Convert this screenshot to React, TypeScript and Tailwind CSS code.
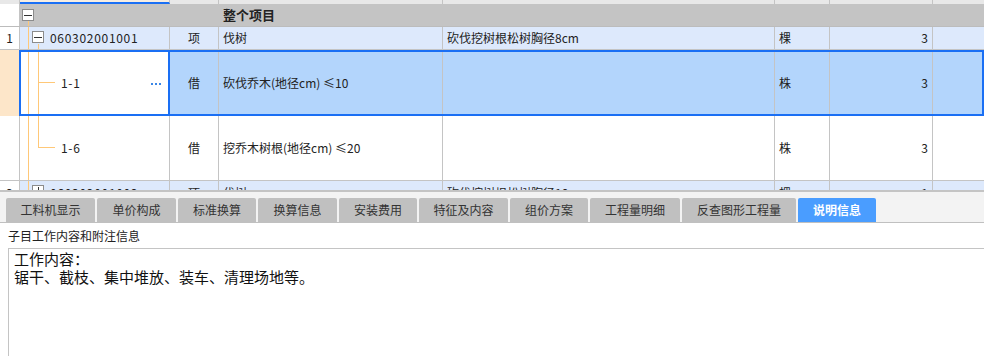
const cjk = { fontFamily: '"Noto Sans CJK SC", "Liberation Sans", sans-serif' };

const tabs = [
  { label: "工料机显示", w: "w-[89px]" },
  { label: "单价构成", w: "w-[79px]" },
  { label: "标准换算", w: "w-[78px]" },
  { label: "换算信息", w: "w-[79px]" },
  { label: "安装费用", w: "w-[78px]" },
  { label: "特征及内容", w: "w-[89px]" },
  { label: "组价方案", w: "w-[78px]" },
  { label: "工程量明细", w: "w-[90px]" },
  { label: "反查图形工程量", w: "w-[114px]" },
  { label: "说明信息", w: "w-[78px]", active: true },
];

function Box({ sign }: { sign: "-" | "+" }) {
  return (
    <span className="absolute w-[12px] h-[12px] border border-[#8c8c8c] bg-white flex items-center justify-center">
      <span className="block w-[8px] h-[1px] bg-[#333]" />
      {sign === "+" && <span className="absolute block w-[1px] h-[8px] bg-[#333]" />}
    </span>
  );
}

const line = "absolute bg-[#ffc878]";
const cell = "h-full border-r border-[#c4c4c4] flex items-center shrink-0";

export default function App() {
  return (
    <div className="w-[984px] h-[356px] overflow-hidden bg-white text-[12px] text-[#222]" style={cjk}>
      {/* grid */}
      <div className="h-[190px] overflow-hidden flex flex-col">
        {/* header strip */}
        <div className="h-[4px] flex shrink-0 bg-[#e8e8e8]">
          <div className="w-[20px] border-r border-[#c4c4c4]" />
          <div className="w-[150px] border-r border-[#c4c4c4] bg-[#f6ede2] border-b-2 border-b-[#1a6ff4]" />
          <div className="w-[49px] border-r border-[#c4c4c4]" />
          <div className="w-[224px] border-r border-[#c4c4c4]" />
          <div className="w-[332px] border-r border-[#c4c4c4]" />
          <div className="w-[55px] border-r border-[#c4c4c4]" />
          <div className="w-[103px] border-r border-[#c4c4c4]" />
          <div className="flex-1" />
        </div>

        {/* 整个项目 */}
        <div className="h-[23px] flex shrink-0 border-b border-[#bcbcbc]">
          <div className={`${cell} w-[20px] bg-white`} />
          <div className={`${cell} w-[150px] bg-[#c4c4c4] relative`}>
            <span className="absolute left-[2px] top-[5px]"><Box sign="-" /></span>
            <span className={`${line} left-[8px] top-[17px] bottom-0 w-[1px]`} />
          </div>
          <div className={`${cell} w-[49px] bg-[#c4c4c4]`} />
          <div className={`${cell} w-[224px] bg-[#c4c4c4] pl-[4px] font-bold text-[13px]`}>整个项目</div>
          <div className={`${cell} w-[332px] bg-[#c4c4c4]`} />
          <div className={`${cell} w-[55px] bg-[#c4c4c4]`} />
          <div className={`${cell} w-[103px] bg-[#c4c4c4]`} />
          <div className="flex-1 bg-[#c4c4c4]" />
        </div>

        {/* row 1 */}
        <div className="h-[23px] flex shrink-0 bg-[#dde9fc] border-b border-[#c4c4c4]">
          <div className={`${cell} w-[20px] bg-white justify-center`}>1</div>
          <div className={`${cell} w-[150px] relative pl-[30px] tracking-[0.7px]`}>
            <span className={`${line} left-[8px] top-0 bottom-0 w-[1px]`} />
            <span className="absolute left-[12px] top-[4px]"><Box sign="-" /></span>
            <span className={`${line} left-[18px] top-[17px] bottom-0 w-[1px]`} />
            060302001001
          </div>
          <div className={`${cell} w-[49px] justify-center`}>项</div>
          <div className={`${cell} w-[224px] pl-[4px]`}>伐树</div>
          <div className={`${cell} w-[332px] pl-[4px]`}>砍伐挖树根松树胸径8cm</div>
          <div className={`${cell} w-[55px] pl-[4px]`}>棵</div>
          <div className={`${cell} w-[103px] justify-end pr-[4px]`}>3</div>
          <div className="flex-1" />
        </div>

        {/* selected row 1-1 */}
        <div className="h-[66px] flex shrink-0">
          <div className="h-full w-[19px] bg-[#fde6c9] shrink-0" />
          <div className="flex-1 flex border-2 border-[#1a6ff4] bg-[#b3d5fc]">
            <div className="h-full w-[149px] shrink-0 bg-white border-r-2 border-[#1a6ff4] relative flex items-center pl-[40px] pr-[7px] justify-between">
              <span className={`${line} left-[7px] top-0 bottom-0 w-[1px]`} />
              <span className={`${line} left-[17px] top-0 bottom-0 w-[1px]`} />
              <span className={`${line} left-[17px] top-[30px] w-[17px] h-[1px]`} />
              <span className="tracking-[0.7px]">1-1</span>
              <span className="flex gap-[2px] mt-[1px]">
                <span className="block w-[2px] h-[2px] bg-[#3a86e6]" />
                <span className="block w-[2px] h-[2px] bg-[#3a86e6]" />
                <span className="block w-[2px] h-[2px] bg-[#3a86e6]" />
              </span>
            </div>
            <div className={`${cell} w-[49px] justify-center`}>借</div>
            <div className={`${cell} w-[224px] pl-[4px]`}>砍伐乔木(地径cm) ≤10</div>
            <div className={`${cell} w-[332px]`} />
            <div className={`${cell} w-[55px] pl-[4px]`}>株</div>
            <div className={`${cell} w-[103px] justify-end pr-[4px]`}>3</div>
            <div className="flex-1" />
          </div>
        </div>

        {/* row 1-6 */}
        <div className="h-[65px] flex shrink-0 bg-white border-b border-[#c4c4c4]">
          <div className={`${cell} w-[20px]`} />
          <div className={`${cell} w-[150px] relative pl-[41px] tracking-[0.7px]`}>
            <span className={`${line} left-[8px] top-0 bottom-0 w-[1px]`} />
            <span className={`${line} left-[18px] top-0 h-[32px] w-[1px]`} />
            <span className={`${line} left-[18px] top-[31px] w-[17px] h-[1px]`} />
            1-6
          </div>
          <div className={`${cell} w-[49px] justify-center`}>借</div>
          <div className={`${cell} w-[224px] pl-[4px]`}>挖乔木树根(地径cm) ≤20</div>
          <div className={`${cell} w-[332px]`} />
          <div className={`${cell} w-[55px] pl-[4px]`}>株</div>
          <div className={`${cell} w-[103px] justify-end pr-[4px]`}>3</div>
          <div className="flex-1" />
        </div>

        {/* row 2 (clipped) */}
        <div className="h-[23px] flex shrink-0 bg-[#dde9fc]">
          <div className={`${cell} w-[20px] bg-white justify-center`}>2</div>
          <div className={`${cell} w-[150px] relative pl-[30px] tracking-[0.7px]`}>
            <span className={`${line} left-[8px] top-0 bottom-0 w-[1px]`} />
            <span className="absolute left-[12px] top-[4px]"><Box sign="+" /></span>
            060302001002
          </div>
          <div className={`${cell} w-[49px] justify-center`}>项</div>
          <div className={`${cell} w-[224px] pl-[4px]`}>伐树</div>
          <div className={`${cell} w-[332px] pl-[4px]`}>砍伐挖树根松树胸径10cm</div>
          <div className={`${cell} w-[55px] pl-[4px]`}>棵</div>
          <div className={`${cell} w-[103px] justify-end pr-[4px]`}>1</div>
          <div className="flex-1" />
        </div>
      </div>

      {/* tab bar */}
      <div className="h-[33px] border-t-2 border-[#c4c4c4] border-b border-b-[#c0c0c0] bg-[#f3f3f3] flex items-end pl-[6px] gap-[2px]">
        {tabs.map((t) => (
          <div
            key={t.label}
            className={`${t.w} h-[24px] rounded-t-[2px] flex items-center justify-center text-[12px] ${
              t.active ? "bg-[#4a9dff] text-white font-bold" : "bg-[#c0c0c0] text-[#333]"
            }`}
          >
            {t.label}
          </div>
        ))}
      </div>

      {/* description */}
      <div className="h-[25px] flex items-center pl-[8px] text-[12px] text-[#222]">子目工作内容和附注信息</div>
      <div className="ml-[8px] h-[120px] border-l border-t border-[#c4c4c4] pl-[5px] pt-[1px] text-[15px] leading-[18px] text-[#111]">
        <div>工作内容：</div>
        <div>锯干、截枝、集中堆放、装车、清理场地等。</div>
      </div>
    </div>
  );
}
